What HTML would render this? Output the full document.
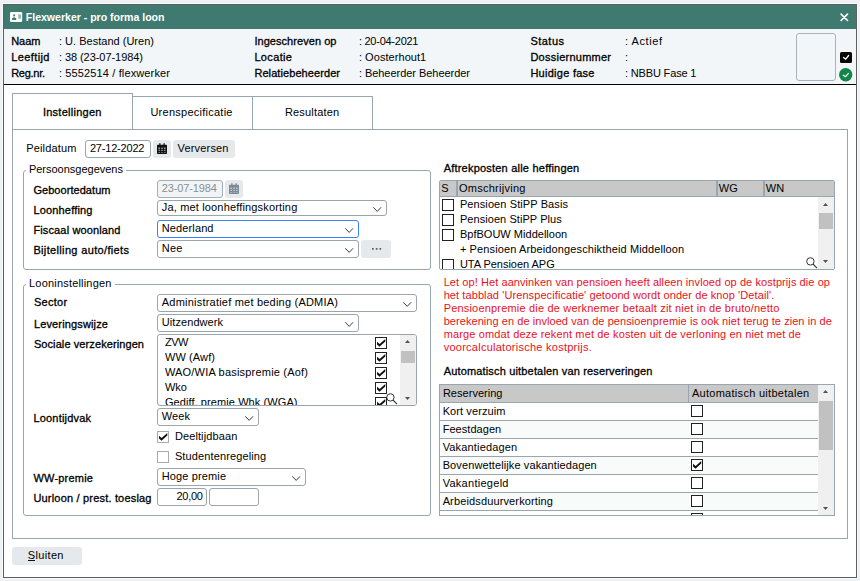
<!DOCTYPE html>
<html lang="nl"><head><meta charset="utf-8"><title>Flexwerker - pro forma loon</title>
<style>
*{box-sizing:border-box;margin:0;padding:0}
html,body{width:860px;height:581px;overflow:hidden}
body{background:#eef1f4;font-family:"Liberation Sans",sans-serif;font-size:11px;color:#111;position:relative}
.a{position:absolute}
.t{position:absolute;white-space:pre;line-height:14px;height:14px}
.win{left:3px;top:4px;width:854px;height:574px;border:1px solid #5e5e5e;background:#fff;box-shadow:0 0 0 1px #f8fafb}
.title{left:4px;top:5px;width:852px;height:24px;background:#3f7a71}
.hdr{left:4px;top:29px;width:852px;height:55px;background:#f2f6f9}
.hline{left:4px;top:84px;width:852px;height:1px;background:#000}
.ln{background:#98a6b0}
.box{border:1px solid #98a6b0;background:#fff}
.inp{border:1px solid #9aa4ac;border-radius:3px;background:#fff}
.btn{background:#e5e9ec;border-radius:3px}
.fs{border:1px solid #98a6b0;border-radius:3px}
.cb{width:12px;height:12px;border:1px solid #222;background:#fff}
.sb{background:#f0f0f0}
.th{background:#c1c1c1}
.gh{background:#c8c8c8}
svg{position:absolute;overflow:visible}
</style></head><body>
<div class="a win"></div>
<div class="a title"></div>
<div class="a hdr"></div>
<div class="a hline"></div>

<!-- title icon + close -->
<svg style="left:9.9px;top:11.9px" width="12.2" height="9.9" viewBox="0 0 12.2 9.9"><rect x="0" y="0" width="12.2" height="9.9" rx="1.2" fill="#fff"/><circle cx="4.15" cy="3.3" r="1.05" fill="#3f7a71"/><path d="M3.5 4.2h1.3l0.5 1.8h-2.3z" fill="#8fb3ad"/><rect x="2.1" y="6" width="4.1" height="1.9" rx="0.3" fill="#3f7a71"/><rect x="8.2" y="2.3" width="2.8" height="4.5" fill="#9dbdb7"/></svg>
<svg style="left:839.7px;top:12.9px" width="9" height="9" viewBox="0 0 9 9"><path d="M1.1 1.1 L7.5 7.5 M7.5 1.1 L1.1 7.5" stroke="#fff" stroke-width="1.6" stroke-linecap="round"/></svg>

<!-- photo box + status icons -->
<div class="a" style="left:796px;top:33px;width:40px;height:48px;border:1px solid #a7b3bd;border-radius:3px;background:#f2f6f9"></div>
<svg style="left:840.1px;top:51.5px" width="12" height="11" viewBox="0 0 12 11"><rect width="12" height="11" rx="1.5" fill="#060606"/><path d="M3.1 5.2 L5.7 7.1 L9 3.0" stroke="#fff" stroke-width="1.25" fill="none"/></svg>
<svg style="left:839.3px;top:67.7px" width="13.4" height="13.4" viewBox="0 0 13.4 13.4"><circle cx="6.7" cy="6.7" r="6.7" fill="#11864b"/><path d="M3.9 6.9 L6.45 8.7 L9.7 5.05" stroke="#fff" stroke-width="1.25" fill="none"/></svg>

<!-- tabs -->
<div class="a box" style="left:12px;top:129px;width:836px;height:410px"></div>
<div class="a box" style="left:12px;top:93px;width:121px;height:37px"></div>
<div class="a box" style="left:132px;top:96px;width:121px;height:34px"></div>
<div class="a box" style="left:252px;top:96px;width:121px;height:34px"></div>

<!-- peildatum row -->
<div class="a inp" style="left:85px;top:140px;width:66px;height:18px"></div>
<div class="a btn" style="left:153px;top:140px;width:18px;height:18px"></div>
<div class="a btn" style="left:173px;top:140px;width:62px;height:18px"></div>
<svg style="left:157.2px;top:143px" width="10" height="11" viewBox="0 0 10 11"><path d="M0.8 1.8h8.4a0.8 0.8 0 0 1 0.8 0.8v7.6a0.8 0.8 0 0 1-0.8 0.8h-8.4a0.8 0.8 0 0 1-0.8-0.8v-7.6a0.8 0.8 0 0 1 0.8-0.8z M2.2 0.2h1.3v2h-1.3z M6.5 0.2h1.3v2h-1.3z" fill="#111"/><path d="M1.6 4.5h1.1v1.7h-1.1z M1.6 7.1h1.1v1h-1.1z M1.6 8.9h1.1v0.9h-1.1z M4.45 4.5h1.1v1.7h-1.1z M4.45 7.1h1.1v1h-1.1z M4.45 8.9h1.1v0.9h-1.1z M7.3 4.5h1.1v1.7h-1.1z M7.3 7.1h1.1v1h-1.1z M7.3 8.9h1.1v0.9h-1.1z" fill="#e5e9ec" opacity="0.9"/></svg>

<!-- fieldset 1 -->
<div class="a fs" style="left:23px;top:170px;width:408px;height:100px"></div>
<div class="a inp" style="left:157px;top:180px;width:66px;height:18px;background:#f1f4f7;border-color:#a4aeb6"></div>
<div class="a btn" style="left:225px;top:180px;width:18px;height:18px"></div>
<svg style="left:229.1px;top:183.1px" width="10" height="11" viewBox="0 0 10 11"><path d="M0.8 1.8h8.4a0.8 0.8 0 0 1 0.8 0.8v7.6a0.8 0.8 0 0 1-0.8 0.8h-8.4a0.8 0.8 0 0 1-0.8-0.8v-7.6a0.8 0.8 0 0 1 0.8-0.8z M2.2 0.2h1.3v2h-1.3z M6.5 0.2h1.3v2h-1.3z" fill="#7d8994"/><path d="M1.6 4.5h1.1v1.7h-1.1z M1.6 7.1h1.1v1h-1.1z M1.6 8.9h1.1v0.9h-1.1z M4.45 4.5h1.1v1.7h-1.1z M4.45 7.1h1.1v1h-1.1z M4.45 8.9h1.1v0.9h-1.1z M7.3 4.5h1.1v1.7h-1.1z M7.3 7.1h1.1v1h-1.1z M7.3 8.9h1.1v0.9h-1.1z" fill="#e5e9ec" opacity="0.9"/></svg>
<div class="a inp" style="left:157px;top:200px;width:230px;height:16px"></div>
<div class="a inp" style="left:157px;top:220px;width:202px;height:18px;border-color:#3b82f6"></div>
<div class="a inp" style="left:157px;top:240px;width:202px;height:18px"></div>
<div class="a btn" style="left:361px;top:240px;width:30px;height:18px"></div>
<svg style="left:371.9px;top:248.1px" width="10" height="2" viewBox="0 0 10 2"><path d="M0 0h1.7v1.8h-1.7z M3.8 0h1.7v1.8h-1.7z M7.5 0h1.7v1.8h-1.7z" fill="#5a5f64"/></svg>

<!-- fieldset 2 -->
<div class="a fs" style="left:23px;top:284px;width:408px;height:232px"></div>
<div class="a inp" style="left:157px;top:294px;width:260px;height:18px"></div>
<div class="a inp" style="left:157px;top:314px;width:202px;height:18px"></div>
<div class="a inp" id="list1" style="left:157px;top:334px;width:260px;height:72px;overflow:hidden">
<span class="t" style="left:6.90px;top:-0.31px;font-size:11px;letter-spacing:-0.427px;color:#000;">ZVW</span>
<span class="t" style="left:6.90px;top:14.69px;font-size:11px;letter-spacing:0.115px;color:#000;">WW (Awf)</span>
<span class="t" style="left:6.90px;top:29.69px;font-size:11px;letter-spacing:0.198px;color:#000;">WAO/WIA basispremie (Aof)</span>
<span class="t" style="left:6.90px;top:44.69px;font-size:11px;letter-spacing:0.050px;color:#000;">Wko</span>
<span class="t" style="left:6.90px;top:59.69px;font-size:11px;letter-spacing:0.087px;color:#000;">Gediff. premie Whk (WGA)</span>
<div class="a sb" style="left:242px;top:0;width:16px;height:70px"></div>
<div class="a th" style="left:243px;top:16px;width:14px;height:12px"></div>
<svg style="left:247px;top:5px" width="5" height="3" viewBox="0 0 5 3"><path d="M0 3 L2.5 0 L5 3Z" fill="#505050"/></svg>
<svg style="left:247px;top:61.5px" width="5" height="3" viewBox="0 0 5 3"><path d="M0 0 L2.5 3 L5 0Z" fill="#505050"/></svg>
<svg style="left:228.2px;top:57.8px" width="12" height="12" viewBox="0 0 12 12"><circle cx="4.4" cy="4.4" r="3.7" stroke="#333" stroke-width="1" fill="none"/><path d="M7.1 7.1 L11 11.2" stroke="#333" stroke-width="1.2"/></svg>
<div class="a cb" style="left:217px;top:2px"><svg style="left:0;top:0" width="10" height="10" viewBox="0 0 10 10"><path d="M1 3.8 L3.65 5.9 L9.3 0.9 L9.3 3.5 L3.5 8.8 L1 6.6 Z" fill="#111"/></svg></div>
<div class="a cb" style="left:217px;top:17px"><svg style="left:0;top:0" width="10" height="10" viewBox="0 0 10 10"><path d="M1 3.8 L3.65 5.9 L9.3 0.9 L9.3 3.5 L3.5 8.8 L1 6.6 Z" fill="#111"/></svg></div>
<div class="a cb" style="left:217px;top:32px"><svg style="left:0;top:0" width="10" height="10" viewBox="0 0 10 10"><path d="M1 3.8 L3.65 5.9 L9.3 0.9 L9.3 3.5 L3.5 8.8 L1 6.6 Z" fill="#111"/></svg></div>
<div class="a cb" style="left:217px;top:47px"><svg style="left:0;top:0" width="10" height="10" viewBox="0 0 10 10"><path d="M1 3.8 L3.65 5.9 L9.3 0.9 L9.3 3.5 L3.5 8.8 L1 6.6 Z" fill="#111"/></svg></div>
<div class="a cb" style="left:217px;top:62px"><svg style="left:0;top:0" width="10" height="10" viewBox="0 0 10 10"><path d="M1 3.8 L3.65 5.9 L9.3 0.9 L9.3 3.5 L3.5 8.8 L1 6.6 Z" fill="#111"/></svg></div>
</div>
<div class="a inp" style="left:157px;top:408px;width:102px;height:18px"></div>
<div class="a cb" style="left:157px;top:431px;border-color:#aaa"><svg style="left:0;top:0" width="10" height="10" viewBox="0 0 10 10"><path d="M1 3.8 L3.65 5.9 L9.3 0.9 L9.3 3.5 L3.5 8.8 L1 6.6 Z" fill="#111"/></svg></div>
<div class="a cb" style="left:157px;top:451px;border-color:#aaa"></div>
<div class="a inp" style="left:157px;top:468px;width:149px;height:18px"></div>
<div class="a inp" style="left:157px;top:488px;width:50px;height:18px"></div>
<div class="a inp" style="left:209px;top:488px;width:50px;height:18px"></div>

<!-- grid 1 -->
<div class="a box" id="list2" style="left:439px;top:180px;width:396px;height:90px;overflow:hidden;border-radius:2px">
<div class="a gh" style="left:0;top:0;width:394px;height:15px"></div>
<div class="a ln" style="left:0;top:15px;width:394px;height:1px"></div>
<div class="a ln" style="left:16px;top:0;width:2px;height:15px"></div>
<div class="a ln" style="left:276px;top:0;width:2px;height:15px"></div>
<div class="a ln" style="left:323px;top:0;width:2px;height:15px"></div>
<span class="t" style="left:19.90px;top:15.69px;font-size:11px;letter-spacing:0.100px;color:#000;">Pensioen StiPP Basis</span>
<span class="t" style="left:19.90px;top:30.69px;font-size:11px;letter-spacing:0.064px;color:#000;">Pensioen StiPP Plus</span>
<span class="t" style="left:19.90px;top:45.69px;font-size:11px;letter-spacing:0.021px;color:#000;">BpfBOUW Middelloon</span>
<span class="t" style="left:19.90px;top:60.69px;font-size:11px;letter-spacing:0.124px;color:#000;">+ Pensioen Arbeidongeschiktheid Middelloon</span>
<span class="t" style="left:19.90px;top:75.69px;font-size:11px;letter-spacing:-0.023px;color:#000;">UTA Pensioen APG</span>
<div class="a sb" style="left:378px;top:16px;width:16px;height:72px"></div>
<div class="a th" style="left:379px;top:32px;width:14px;height:16px"></div>
<svg style="left:383px;top:22px" width="5" height="3" viewBox="0 0 5 3"><path d="M0 3 L2.5 0 L5 3Z" fill="#505050"/></svg>
<svg style="left:383px;top:79px" width="5" height="3" viewBox="0 0 5 3"><path d="M0 0 L2.5 3 L5 0Z" fill="#505050"/></svg>
<svg style="left:365.5px;top:76.1px" width="12" height="12" viewBox="0 0 12 12"><circle cx="4.4" cy="4.4" r="3.7" stroke="#333" stroke-width="1" fill="none"/><path d="M7.1 7.1 L11 11.2" stroke="#333" stroke-width="1.2"/></svg>
<div class="a cb" style="left:2px;top:18px"></div>
<div class="a cb" style="left:2px;top:33px"></div>
<div class="a cb" style="left:2px;top:48px"></div>
<div class="a cb" style="left:2px;top:78px"></div>
</div>

<!-- grid 2 -->
<div class="a box" id="grid2" style="left:439px;top:384px;width:396px;height:132px;overflow:hidden">
<div class="a" style="left:0;top:36px;width:378px;height:17px;background:#f9fbfb"></div>
<div class="a" style="left:0;top:72px;width:378px;height:17px;background:#f9fbfb"></div>
<div class="a" style="left:0;top:108px;width:378px;height:17px;background:#f9fbfb"></div>
<div class="a gh" style="left:0;top:0;width:378px;height:17px"></div>
<div class="a ln" style="left:248px;top:0;width:1px;height:17px"></div>
<div class="a ln" style="left:0;top:17px;width:378px;height:1px"></div>
<div class="a ln" style="left:0;top:35px;width:378px;height:1px"></div>
<div class="a ln" style="left:0;top:53px;width:378px;height:1px"></div>
<div class="a ln" style="left:0;top:71px;width:378px;height:1px"></div>
<div class="a ln" style="left:0;top:89px;width:378px;height:1px"></div>
<div class="a ln" style="left:0;top:107px;width:378px;height:1px"></div>
<div class="a ln" style="left:0;top:125px;width:378px;height:1px"></div>
<div class="a sb" style="left:378px;top:0;width:16px;height:130px"></div>
<div class="a th" style="left:379px;top:16px;width:14px;height:49px"></div>
<svg style="left:383px;top:5px" width="5" height="3" viewBox="0 0 5 3"><path d="M0 3 L2.5 0 L5 3Z" fill="#505050"/></svg>
<svg style="left:383px;top:122px" width="5" height="3" viewBox="0 0 5 3"><path d="M0 0 L2.5 3 L5 0Z" fill="#505050"/></svg>
<div class="a cb" style="left:251px;top:20px"></div>
<div class="a cb" style="left:251px;top:38px"></div>
<div class="a cb" style="left:251px;top:56px"></div>
<div class="a cb" style="left:251px;top:74px"><svg style="left:0;top:0" width="10" height="10" viewBox="0 0 10 10"><path d="M1 3.8 L3.65 5.9 L9.3 0.9 L9.3 3.5 L3.5 8.8 L1 6.6 Z" fill="#111"/></svg></div>
<div class="a cb" style="left:251px;top:92px"></div>
<div class="a cb" style="left:251px;top:110px"></div>
<div class="a cb" style="left:251px;top:128px"></div>
</div>

<!-- chevrons -->
<svg style="left:373.1px;top:206.9px" width="8.4" height="5" viewBox="0 0 8.4 5"><path d="M0.3 0.3 L4.2 4.4 L8.1 0.3" stroke="#3a3a3a" stroke-width="1" fill="none"/></svg>
<svg style="left:345.1px;top:227.8px" width="8.4" height="5" viewBox="0 0 8.4 5"><path d="M0.3 0.3 L4.2 4.4 L8.1 0.3" stroke="#3a3a3a" stroke-width="1" fill="none"/></svg>
<svg style="left:345.1px;top:247.9px" width="8.4" height="5" viewBox="0 0 8.4 5"><path d="M0.3 0.3 L4.2 4.4 L8.1 0.3" stroke="#3a3a3a" stroke-width="1" fill="none"/></svg>
<svg style="left:402.9px;top:301.7px" width="8.4" height="5" viewBox="0 0 8.4 5"><path d="M0.3 0.3 L4.2 4.4 L8.1 0.3" stroke="#3a3a3a" stroke-width="1" fill="none"/></svg>
<svg style="left:345.1px;top:321.9px" width="8.4" height="5" viewBox="0 0 8.4 5"><path d="M0.3 0.3 L4.2 4.4 L8.1 0.3" stroke="#3a3a3a" stroke-width="1" fill="none"/></svg>
<svg style="left:245.1px;top:415.9px" width="8.4" height="5" viewBox="0 0 8.4 5"><path d="M0.3 0.3 L4.2 4.4 L8.1 0.3" stroke="#3a3a3a" stroke-width="1" fill="none"/></svg>
<svg style="left:292.1px;top:475.9px" width="8.4" height="5" viewBox="0 0 8.4 5"><path d="M0.3 0.3 L4.2 4.4 L8.1 0.3" stroke="#3a3a3a" stroke-width="1" fill="none"/></svg>
<!-- sluiten -->
<div class="a btn" style="left:12px;top:547px;width:70px;height:18px"></div>
<div class="a" style="left:28px;top:560px;width:7px;height:1px;background:#111"></div>

<span class="t" style="left:25.80px;top:9.93px;font-size:10.6px;letter-spacing:-0.031px;color:#fff;font-weight:bold;">Flexwerker - pro forma loon</span>
<span class="t" style="left:11.15px;top:33.69px;font-size:11px;letter-spacing:0.002px;color:#000;-webkit-text-stroke:0.3px;">Naam</span>
<span class="t" style="left:58.90px;top:33.69px;font-size:11px;letter-spacing:0.019px;color:#000;">: U. Bestand (Uren)</span>
<span class="t" style="left:11.15px;top:50.19px;font-size:11px;letter-spacing:0.409px;color:#000;-webkit-text-stroke:0.3px;">Leeftijd</span>
<span class="t" style="left:58.90px;top:50.19px;font-size:11px;letter-spacing:-0.056px;color:#000;">: 38 (23-07-1984)</span>
<span class="t" style="left:11.15px;top:66.19px;font-size:11px;letter-spacing:-0.270px;color:#000;-webkit-text-stroke:0.3px;">Reg.nr.</span>
<span class="t" style="left:58.90px;top:66.19px;font-size:11px;letter-spacing:0.136px;color:#000;">: 5552514 / flexwerker</span>
<span class="t" style="left:254.40px;top:33.69px;font-size:11px;letter-spacing:0.054px;color:#000;-webkit-text-stroke:0.3px;">Ingeschreven op</span>
<span class="t" style="left:358.90px;top:33.69px;font-size:11px;letter-spacing:-0.254px;color:#000;">: 20-04-2021</span>
<span class="t" style="left:254.40px;top:50.19px;font-size:11px;letter-spacing:0.353px;color:#000;-webkit-text-stroke:0.3px;">Locatie</span>
<span class="t" style="left:358.90px;top:50.19px;font-size:11px;letter-spacing:0.058px;color:#000;">: Oosterhout1</span>
<span class="t" style="left:254.40px;top:66.19px;font-size:11px;letter-spacing:0.081px;color:#000;-webkit-text-stroke:0.3px;">Relatiebeheerder</span>
<span class="t" style="left:358.90px;top:66.19px;font-size:11px;letter-spacing:-0.041px;color:#000;">: Beheerder Beheerder</span>
<span class="t" style="left:530.40px;top:33.69px;font-size:11px;letter-spacing:0.483px;color:#000;-webkit-text-stroke:0.3px;">Status</span>
<span class="t" style="left:624.90px;top:33.69px;font-size:11px;letter-spacing:0.581px;color:#000;">: Actief</span>
<span class="t" style="left:530.40px;top:50.19px;font-size:11px;letter-spacing:0.247px;color:#000;-webkit-text-stroke:0.3px;">Dossiernummer</span>
<span class="t" style="left:624.90px;top:50.19px;font-size:11px;letter-spacing:0.120px;color:#000;">:</span>
<span class="t" style="left:530.40px;top:66.19px;font-size:11px;letter-spacing:0.268px;color:#000;-webkit-text-stroke:0.3px;">Huidige fase</span>
<span class="t" style="left:624.90px;top:66.19px;font-size:11px;letter-spacing:-0.147px;color:#000;">: NBBU Fase 1</span>
<span class="t" style="left:42.90px;top:104.94px;font-size:11px;letter-spacing:0.268px;color:#000;-webkit-text-stroke:0.3px;">Instellingen</span>
<span class="t" style="left:150.40px;top:104.94px;font-size:11px;letter-spacing:0.256px;color:#000;">Urenspecificatie</span>
<span class="t" style="left:284.90px;top:104.94px;font-size:11px;letter-spacing:0.195px;color:#000;">Resultaten</span>
<span class="t" style="left:26.15px;top:141.19px;font-size:11px;letter-spacing:0.179px;color:#000;">Peildatum</span>
<span class="t" style="left:89.90px;top:141.19px;font-size:11px;letter-spacing:-0.187px;color:#000;">27-12-2022</span>
<span class="t" style="left:177.60px;top:140.89px;font-size:11px;letter-spacing:0.171px;color:#000;">Verversen</span>
<span class="t" style="left:28.90px;top:161.69px;font-size:11px;letter-spacing:-0.006px;color:#000;background:#fff;padding:0 3px;margin-left:-3px;">Persoonsgegevens</span>
<span class="t" style="left:33.40px;top:182.94px;font-size:11px;letter-spacing:0.055px;color:#000;-webkit-text-stroke:0.3px;">Geboortedatum</span>
<span class="t" style="left:33.40px;top:202.94px;font-size:11px;letter-spacing:0.179px;color:#000;-webkit-text-stroke:0.3px;">Loonheffing</span>
<span class="t" style="left:33.40px;top:222.69px;font-size:11px;letter-spacing:0.140px;color:#000;-webkit-text-stroke:0.3px;">Fiscaal woonland</span>
<span class="t" style="left:33.40px;top:242.69px;font-size:11px;letter-spacing:0.346px;color:#000;-webkit-text-stroke:0.3px;">Bijtelling auto/fiets</span>
<span class="t" style="left:161.80px;top:180.89px;font-size:11px;letter-spacing:-0.142px;color:#8a8f94;">23-07-1984</span>
<span class="t" style="left:161.80px;top:200.19px;font-size:11px;letter-spacing:0.161px;color:#000;">Ja, met loonheffingskorting</span>
<span class="t" style="left:161.80px;top:221.19px;font-size:11px;letter-spacing:0.117px;color:#000;">Nederland</span>
<span class="t" style="left:161.80px;top:241.19px;font-size:11px;letter-spacing:0.256px;color:#000;">Nee</span>
<span class="t" style="left:29.05px;top:276.19px;font-size:11px;letter-spacing:0.189px;color:#000;background:#fff;padding:0 3px;margin-left:-3px;">Looninstellingen</span>
<span class="t" style="left:33.90px;top:294.79px;font-size:11px;letter-spacing:0.281px;color:#000;-webkit-text-stroke:0.3px;">Sector</span>
<span class="t" style="left:33.90px;top:316.69px;font-size:11px;letter-spacing:0.150px;color:#000;-webkit-text-stroke:0.3px;">Leveringswijze</span>
<span class="t" style="left:33.90px;top:336.69px;font-size:11px;letter-spacing:0.093px;color:#000;-webkit-text-stroke:0.3px;">Sociale verzekeringen</span>
<span class="t" style="left:33.40px;top:411.19px;font-size:11px;letter-spacing:0.194px;color:#000;-webkit-text-stroke:0.3px;">Loontijdvak</span>
<span class="t" style="left:33.40px;top:471.19px;font-size:11px;letter-spacing:0.218px;color:#000;-webkit-text-stroke:0.3px;">WW-premie</span>
<span class="t" style="left:33.40px;top:491.19px;font-size:11px;letter-spacing:0.190px;color:#000;-webkit-text-stroke:0.3px;">Uurloon / prest. toeslag</span>
<span class="t" style="left:161.80px;top:295.19px;font-size:11px;letter-spacing:0.214px;color:#000;">Administratief met beding (ADMIA)</span>
<span class="t" style="left:161.80px;top:315.19px;font-size:11px;letter-spacing:0.067px;color:#000;">Uitzendwerk</span>
<span class="t" style="left:161.80px;top:409.19px;font-size:11px;letter-spacing:0.093px;color:#000;">Week</span>
<span class="t" style="left:174.90px;top:429.19px;font-size:11px;letter-spacing:0.109px;color:#000;">Deeltijdbaan</span>
<span class="t" style="left:174.90px;top:449.19px;font-size:11px;letter-spacing:0.128px;color:#000;">Studentenregeling</span>
<span class="t" style="left:161.80px;top:469.19px;font-size:11px;letter-spacing:0.122px;color:#000;">Hoge premie</span>
<span class="t" style="left:176.40px;top:489.19px;font-size:11px;letter-spacing:-0.233px;color:#000;">20,00</span>
<span class="t" style="left:443.65px;top:161.19px;font-size:11px;letter-spacing:0.213px;color:#000;-webkit-text-stroke:0.3px;">Aftrekposten alle heffingen</span>
<span class="t" style="left:441.15px;top:181.19px;font-size:11px;letter-spacing:0.120px;color:#000;">S</span>
<span class="t" style="left:458.90px;top:181.19px;font-size:11px;letter-spacing:0.275px;color:#000;">Omschrijving</span>
<span class="t" style="left:718.65px;top:181.19px;font-size:11px;letter-spacing:0.120px;color:#000;">WG</span>
<span class="t" style="left:765.65px;top:181.19px;font-size:11px;letter-spacing:0.120px;color:#000;">WN</span>
<span class="t" style="left:443.65px;top:274.69px;font-size:11px;letter-spacing:0.077px;color:#ec0f22;">Let op! Het aanvinken van pensioen heeft alleen invloed op de kostprijs die op</span>
<span class="t" style="left:443.65px;top:287.69px;font-size:11px;letter-spacing:0.090px;color:#ec0f22;">het tabblad &#x27;Urenspecificatie&#x27; getoond wordt onder de knop &#x27;Detail&#x27;.</span>
<span class="t" style="left:443.65px;top:300.69px;font-size:11px;letter-spacing:0.187px;color:#ec0f22;">Pensioenpremie die de werknemer betaalt zit niet in de bruto/netto</span>
<span class="t" style="left:443.65px;top:313.69px;font-size:11px;letter-spacing:0.061px;color:#ec0f22;">berekening en de invloed van de pensioenpremie is ook niet terug te zien in de</span>
<span class="t" style="left:443.65px;top:326.69px;font-size:11px;letter-spacing:0.138px;color:#ec0f22;">marge omdat deze rekent met de kosten uit de verloning en niet met de</span>
<span class="t" style="left:443.65px;top:339.69px;font-size:11px;letter-spacing:0.258px;color:#ec0f22;">voorcalculatorische kostprijs.</span>
<span class="t" style="left:443.65px;top:364.19px;font-size:11px;letter-spacing:0.165px;color:#000;-webkit-text-stroke:0.3px;">Automatisch uitbetalen van reserveringen</span>
<span class="t" style="left:442.90px;top:386.19px;font-size:11px;letter-spacing:0.029px;color:#000;">Reservering</span>
<span class="t" style="left:691.90px;top:386.19px;font-size:11px;letter-spacing:0.288px;color:#000;">Automatisch uitbetalen</span>
<span class="t" style="left:442.65px;top:404.19px;font-size:11px;letter-spacing:0.100px;color:#000;">Kort verzuim</span>
<span class="t" style="left:442.65px;top:422.19px;font-size:11px;letter-spacing:0.055px;color:#000;">Feestdagen</span>
<span class="t" style="left:442.65px;top:440.19px;font-size:11px;letter-spacing:0.167px;color:#000;">Vakantiedagen</span>
<span class="t" style="left:442.65px;top:458.19px;font-size:11px;letter-spacing:0.109px;color:#000;">Bovenwettelijke vakantiedagen</span>
<span class="t" style="left:442.65px;top:476.19px;font-size:11px;letter-spacing:0.278px;color:#000;">Vakantiegeld</span>
<span class="t" style="left:442.65px;top:494.19px;font-size:11px;letter-spacing:0.136px;color:#000;">Arbeidsduurverkorting</span>
<span class="t" style="left:27.70px;top:547.79px;font-size:11px;letter-spacing:0.360px;color:#000;">Sluiten</span>
</body></html>
